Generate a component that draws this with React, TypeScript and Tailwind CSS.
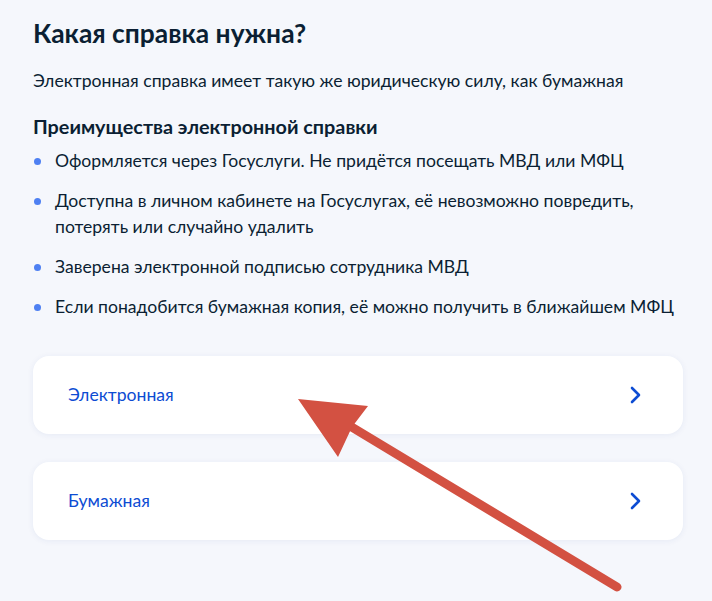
import React from "react";

const benefits: string[][] = [
  ["Оформляется через Госуслуги. Не придётся посещать МВД или МФЦ"],
  [
    "Доступна в личном кабинете на Госуслугах, её невозможно повредить,",
    "потерять или случайно удалить",
  ],
  ["Заверена электронной подписью сотрудника МВД"],
  ["Если понадобится бумажная копия, её можно получить в ближайшем МФЦ"],
];

const options = ["Электронная", "Бумажная"];

const Chevron = () => (
  <svg width="12" height="18" viewBox="0 0 12 18" fill="none">
    <path
      d="M3 2l7 7-7 7"
      stroke="#0d4cd3"
      strokeWidth="2.6"
      strokeLinecap="round"
      strokeLinejoin="round"
    />
  </svg>
);

export default function App() {
  return (
    <div
      className="relative w-[712px] h-[601px] overflow-hidden bg-[#f5f7fc] text-[#0b1f33]"
      style={{ fontFamily: "Lato, 'Noto Sans', sans-serif" }}
    >
      <div className="pl-[33px] pr-[29px] pt-[17px]">
        {/* header */}
        <h1 className="text-[26.4px] leading-[32px] font-bold">Какая справка нужна?</h1>
        <p className="mt-[20px] text-[17.6px] leading-[24px] whitespace-nowrap">
          Электронная справка имеет такую же юридическую силу, как бумажная
        </p>

        {/* benefits */}
        <h2 className="mt-[20px] text-[19.8px] leading-[26px] font-bold">
          Преимущества электронной справки
        </h2>
        <ul className="mt-[9px] flex flex-col gap-[14px]">
          {benefits.map((lines, i) => (
            <li key={i} className="flex text-[17.6px] leading-[26px] whitespace-nowrap">
              <span className="w-[22px] shrink-0 pt-[10px] pl-[1px]">
                <span className="block w-[7px] h-[7px] rounded-full bg-[#4e80f2]" />
              </span>
              <span>
                {lines.map((l, j) => (
                  <span key={j} className="block">
                    {l}
                  </span>
                ))}
              </span>
            </li>
          ))}
        </ul>

        {/* options */}
        <div className="mt-[36px] flex flex-col gap-[28px] w-[650px]">
          {options.map((o) => (
            <div
              key={o}
              className="h-[78px] rounded-[16px] bg-white shadow-[0_1px_6px_rgba(30,60,140,0.07)] flex items-center justify-between pl-[35px] pr-[42px]"
            >
              <span className="text-[17.6px] leading-[24px] text-[#0d4cd3]">{o}</span>
              <Chevron />
            </div>
          ))}
        </div>
      </div>

      {/* annotation arrow */}
      <svg
        className="absolute left-0 top-0 pointer-events-none"
        width="712"
        height="601"
        viewBox="0 0 712 601"
      >
        <line
          x1="345"
          y1="423"
          x2="617"
          y2="587"
          stroke="#d35142"
          strokeWidth="9"
          strokeLinecap="round"
        />
        <polygon points="298,399 368,406 352,427 338,457" fill="#d35142" />
      </svg>
    </div>
  );
}
